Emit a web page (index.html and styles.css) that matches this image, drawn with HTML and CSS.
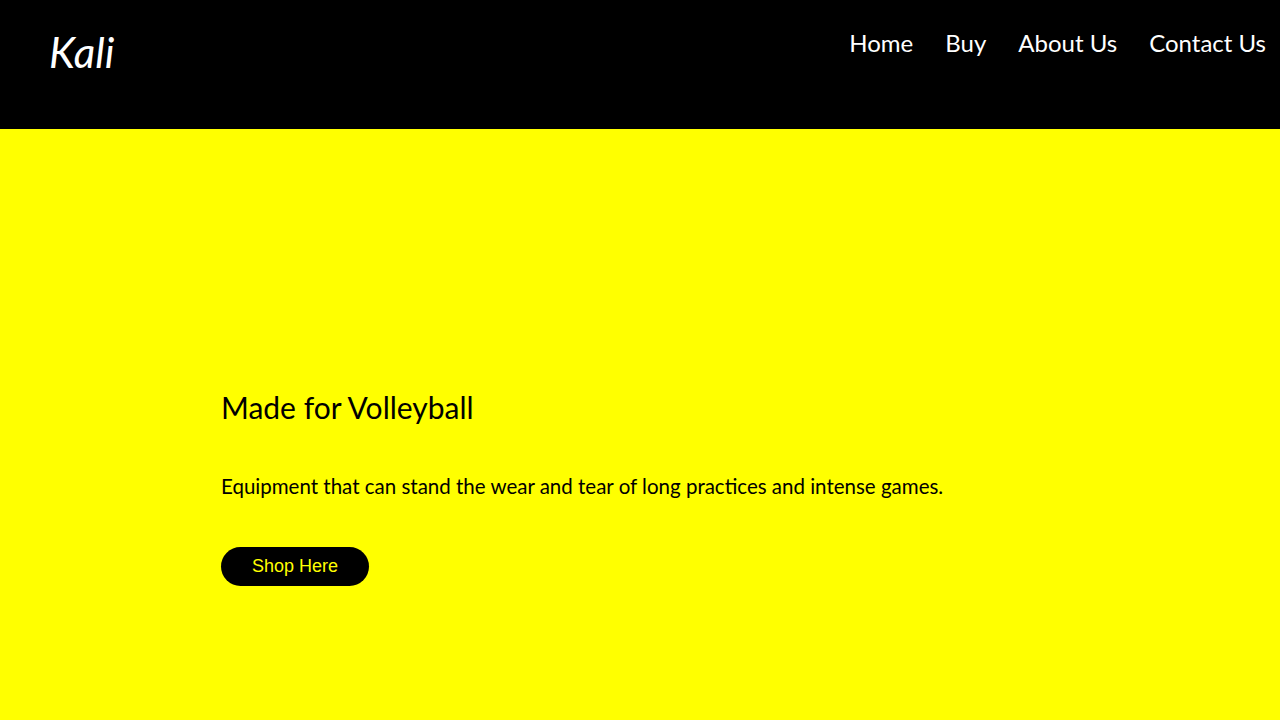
FILE: index.html
```html
<!DOCTYPE html>
<html lang="en">
<head>
<meta charset="utf-8">
<title>Kali</title>
<link rel="stylesheet" href="styles.css">
</head>
<body>
<header class="site-header">
  <div class="logo">Kali</div>
  <nav class="nav">
    <a href="#" class="nav-link">Home</a>
    <a href="#" class="nav-link">Buy</a>
    <a href="#" class="nav-link">About Us</a>
    <a href="#" class="nav-link">Contact Us</a>
  </nav>
</header>
<main class="hero">
  <div class="hero-content">
    <h1 class="hero-title">Made for Volleyball</h1>
    <p class="hero-text">Equipment that can stand the wear and tear of long practices and intense games.</p>
    <a href="#" class="shop-btn">Shop Here</a>
  </div>
</main>
</body>
</html>
```
FILE: styles.css
```css
* { box-sizing: border-box; }
html, body { margin: 0; padding: 0; }
body {
  font-family: "Trebuchet MS", "Lato", sans-serif;
  background: #ffff00;
  height: 720px;
  overflow: hidden;
}
.site-header {
  background: #000;
  height: 129px;
  display: flex;
  justify-content: space-between;
  align-items: flex-start;
  padding: 0 14px 0 49px;
}
.logo {
  color: #fff;
  font-style: italic;
  font-size: 42px;
  margin-top: 28px;
  line-height: 48px;
}
.nav {
  display: flex;
  gap: 32px;
  margin-top: 27px;
}
.nav-link {
  color: #fff;
  text-decoration: none;
  font-size: 24px;
  line-height: 32px;
}
.hero {
  padding-left: 221px;
}
.hero-content {
  padding-top: 258px;
}
.hero-title {
  margin: 0;
  font-weight: normal;
  font-size: 30px;
  line-height: 40px;
  color: #000;
}
.hero-text {
  margin: 39px 0 0;
  font-size: 20.5px;
  line-height: 40px;
  color: #000;
}
.shop-btn {
  display: inline-flex;
  align-items: center;
  justify-content: center;
  margin-top: 41px;
  width: 148px;
  height: 39px;
  background: #000;
  color: #ffff00;
  border-radius: 20px;
  text-decoration: none;
  font-family: "Liberation Sans", Arial, sans-serif;
  font-size: 18px;
}
```
